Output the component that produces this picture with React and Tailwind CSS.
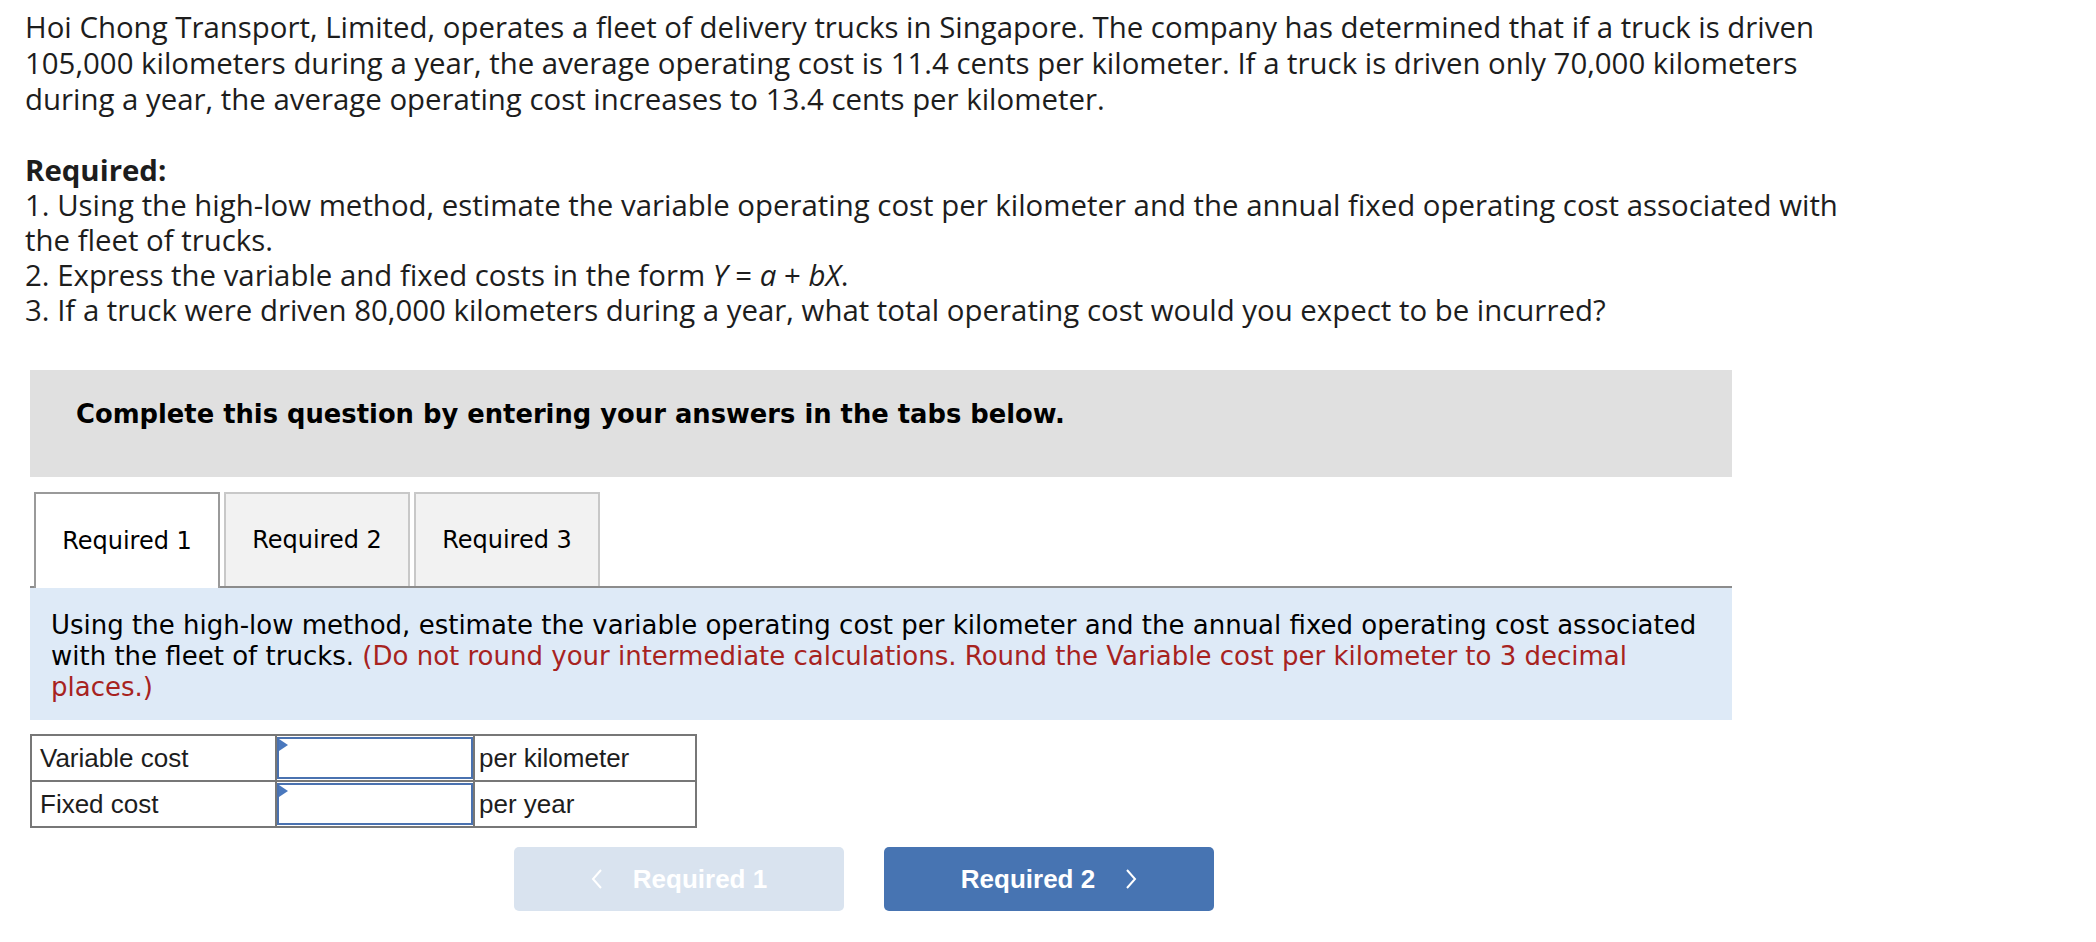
import React from 'react';

const Chevron = ({ dir = 'left' }) => (
  <svg width="12" height="22" viewBox="0 0 12 22" fill="none" stroke="currentColor" strokeWidth="2">
    {dir === 'left' ? <path d="M10 2 L2 11 L10 20" /> : <path d="M2 2 L10 11 L2 20" />}
  </svg>
);

const InputCell = () => (
  <td className="w-[198px] p-0 border-2 border-[#777]">
    <div className="relative w-[196px] h-[42px] border-2 border-[#4a72b0] bg-white">
      <span className="absolute left-0 top-0 w-0 h-0 border-t-[6px] border-b-[6px] border-l-[9px] border-t-transparent border-b-transparent border-l-[#4a78bd]" />
    </div>
  </td>
);

const App = () => {
  const tabs = ['Required 1', 'Required 2', 'Required 3'];

  return (
    <div className="min-h-screen bg-white text-[#1d1d1d]">
      {/* Question text */}
      <div className="pl-[25px] pt-[9px] w-[1880px] font-['Open_Sans',sans-serif] text-[29.4px] leading-[36px]">
        <p>
          Hoi Chong Transport, Limited, operates a fleet of delivery trucks in Singapore. The company has determined that if a truck is driven
          105,000 kilometers during a year, the average operating cost is 11.4 cents per kilometer. If a truck is driven only 70,000 kilometers
          during a year, the average operating cost increases to 13.4 cents per kilometer.
        </p>
        <p className="mt-[36px] font-bold leading-[35px]">Required:</p>
        <div className="leading-[35px]">
          <p>1. Using the high-low method, estimate the variable operating cost per kilometer and the annual fixed operating cost associated with the fleet of trucks.</p>
          <p>2. Express the variable and fixed costs in the form <i>Y</i> = <i>a</i> + <i>bX</i>.</p>
          <p>3. If a truck were driven 80,000 kilometers during a year, what total operating cost would you expect to be incurred?</p>
        </div>
      </div>

      <div className="ml-[30px] w-[1702px] mt-[42px] font-['DejaVu_Sans',sans-serif]">
        {/* Instructions */}
        <div className="h-[107px] bg-[#e0e0e0] pl-[46px] pt-[28px]">
          <p className="text-[25.8px] font-bold text-black leading-[32px]">Complete this question by entering your answers in the tabs below.</p>
        </div>

        {/* Tabs */}
        <div className="mt-[15px] flex items-end border-b-2 border-[#8c8c8c]">
          {tabs.map((t, i) => (
            <div
              key={t}
              className={
                i === 0
                  ? 'w-[186px] h-[96px] -mb-[2px] ml-[4px] flex items-center justify-center bg-white border-2 border-b-0 border-[#9a9a9a] text-[24px] text-black'
                  : 'w-[186px] h-[94px] ml-[4px] flex items-center justify-center bg-[#f2f2f2] border-2 border-b-0 border-[#c8c8c8] text-[24px] text-black'
              }
            >
              {t}
            </div>
          ))}
        </div>

        {/* Tab content */}
        <div className="bg-[#deeaf7] h-[132px] pl-[21px] pr-[20px] pt-[22px] text-[26px] leading-[31px] text-black">
          Using the high-low method, estimate the variable operating cost per kilometer and the annual fixed operating cost associated
          with the fleet of trucks.{' '}
          <span className="text-[#a7231f]">
            (Do not round your intermediate calculations. Round the Variable cost per kilometer to 3 decimal places.)
          </span>
        </div>

        <table className="mt-[14px] border-collapse font-['Liberation_Sans',sans-serif] text-[26px] text-[#1d1d1d]">
          <tbody>
            <tr className="h-[46px]">
              <td className="w-[245px] border-2 border-[#777] pl-[8px] leading-none">Variable cost</td>
              <InputCell />
              <td className="w-[222px] border-2 border-[#777] pl-[4px] leading-none">per kilometer</td>
            </tr>
            <tr className="h-[46px]">
              <td className="w-[245px] border-2 border-[#777] pl-[8px] leading-none">Fixed cost</td>
              <InputCell />
              <td className="w-[222px] border-2 border-[#777] pl-[4px] leading-none">per year</td>
            </tr>
          </tbody>
        </table>

        {/* Navigation */}
        <div className="mt-[19px] ml-[484px] flex gap-[40px] font-['Liberation_Sans',sans-serif] text-[26px] font-bold text-white">
          <button className="w-[330px] h-[64px] rounded-[5px] bg-[#d9e3ef] flex items-center justify-center gap-[30px]">
            <Chevron dir="left" />
            <span>Required 1</span>
          </button>
          <button className="w-[330px] h-[64px] rounded-[5px] bg-[#4774b2] flex items-center justify-center gap-[30px]">
            <span>Required 2</span>
            <Chevron dir="right" />
          </button>
        </div>
      </div>
    </div>
  );
};

export default App;
